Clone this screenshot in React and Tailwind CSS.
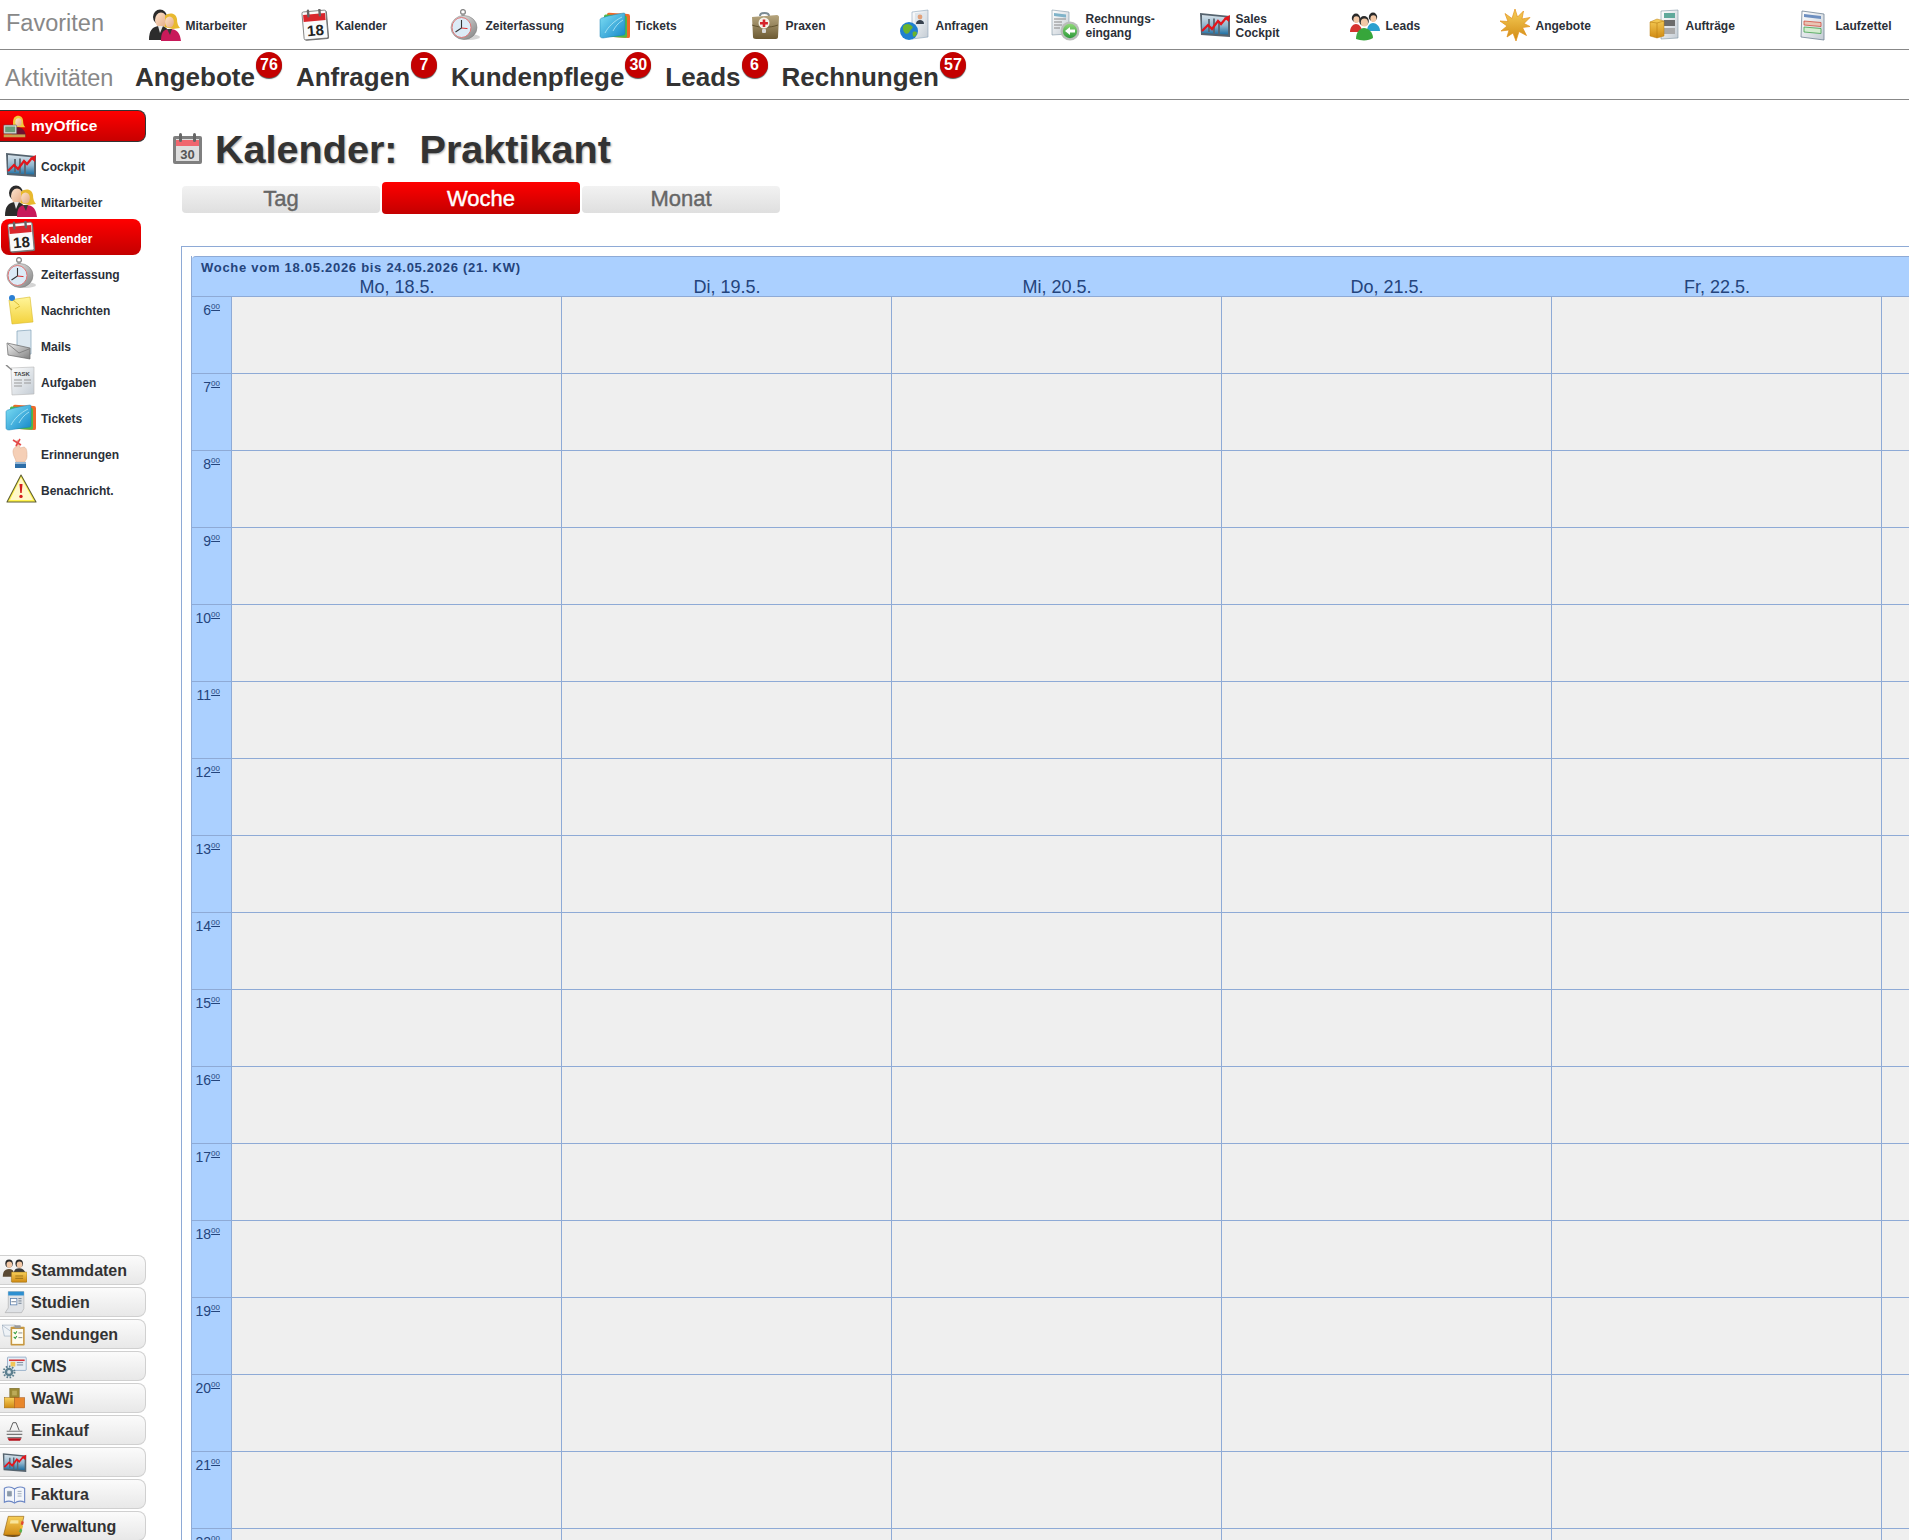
import React from "react";

const Sky = () => (
  <svg className="absolute w-0 h-0" aria-hidden="true">
    <defs>
      <linearGradient id="gBlue" x1="0" y1="0" x2="1" y2="1"><stop offset="0" stopColor="#7fe0f5" /><stop offset="1" stopColor="#1487c9" /></linearGradient>
      <linearGradient id="gGold" x1="0" y1="0" x2="0" y2="1"><stop offset="0" stopColor="#f7cf5a" /><stop offset="1" stopColor="#d08a12" /></linearGradient>
      <linearGradient id="gPaper" x1="0" y1="0" x2="1" y2="1"><stop offset="0" stopColor="#ffffff" /><stop offset="1" stopColor="#c4ccd4" /></linearGradient>
      <linearGradient id="gSilver" x1="0" y1="0" x2="1" y2="1"><stop offset="0" stopColor="#f2f2f2" /><stop offset="1" stopColor="#7f7f7f" /></linearGradient>
      <linearGradient id="gBrown" x1="0" y1="0" x2="0" y2="1"><stop offset="0" stopColor="#b7a67e" /><stop offset="1" stopColor="#6c5a33" /></linearGradient>
      <linearGradient id="gNote" x1="0" y1="0" x2="0" y2="1"><stop offset="0" stopColor="#fff59a" /><stop offset="1" stopColor="#f3d23c" /></linearGradient>
      <linearGradient id="gGreen" x1="0" y1="0" x2="0" y2="1"><stop offset="0" stopColor="#8ed878" /><stop offset="1" stopColor="#2e9a3a" /></linearGradient>
      <linearGradient id="gScreen" x1="0" y1="0" x2="0" y2="1"><stop offset="0" stopColor="#d7e2ea" /><stop offset=".55" stopColor="#8fb4cc" /><stop offset="1" stopColor="#1d6fa3" /></linearGradient>
      <linearGradient id="gSkin" x1="0" y1="0" x2="1" y2="1"><stop offset="0" stopColor="#fde3cd" /><stop offset="1" stopColor="#e3a983" /></linearGradient>
    </defs>
  </svg>
);

const Head = ({ x, y, r = 4, hair = "#2b2b2b" }) => (
  <g>
    <ellipse cx={x} cy={y - 1} rx={r + 0.8} ry={r + 1} fill={hair} />
    <ellipse cx={x + 0.4} cy={y + 0.6} rx={r - 0.4} ry={r} fill="#f3c8a6" />
  </g>
);

const People = () => (
  <>
    <ellipse cx={11} cy={8} rx={7} ry={7.5} fill="#2b2b2b" />
    <ellipse cx={12} cy={11} rx={6} ry={7.5} fill="url(#gSkin)" />
    <path d="M0 31c0-9 3-14 11-14s9 5 9 14z" fill="#2c2c2c" />
    <path d="M9 17l2 7 3-7z" fill="#e8e8e8" />
    <path d="M16 7c4-4 11-3 12 3 0 4 1 7 3 9l-7 1-9-2c2-2 1-5 1-11z" fill="#e8b92f" />
    <ellipse cx={20.5} cy={13} rx={4.4} ry={5.6} fill="url(#gSkin)" />
    <path d="M12 32c0-8 2-12 9-12s10 4 11 12z" fill="#c81a5a" />
    <path d="M18 20l3 6 2-6z" fill="#3a3a3a" />
  </>
);

const Cal = () => (
  <g transform="rotate(-5 16 16)">
    <rect x="5" y="3" width="24" height="28" rx="1.5" fill="#777" />
    <rect x="4" y="2" width="24" height="28" rx="1.5" fill="#fafafa" stroke="#6d6d6d" strokeWidth=".8" />
    <rect x="5" y="5" width="22" height="7" fill="#d9262c" />
    <rect x="9" y="0" width="2.4" height="8" rx="1.2" fill="#666" />
    <rect x="20.5" y="0" width="2.4" height="8" rx="1.2" fill="#666" />
    <text x="16" y="26.5" textAnchor="middle" fontSize="15" fontWeight="700" fontFamily="Liberation Sans, sans-serif" fill="#222">18</text>
  </g>
);

const GrayCal = () => (
  <>
    <rect x="0" y="3" width="29" height="28" rx="2" fill="#7f7f7f" />
    <rect x="3" y="6" width="23" height="22" fill="#dedede" />
    <rect x="3" y="7" width="23" height="6" fill="#f0666e" />
    <rect x="6" y="0" width="3" height="9" rx="1.5" fill="#666" />
    <rect x="20" y="0" width="3" height="9" rx="1.5" fill="#666" />
    <text x="14.5" y="26" textAnchor="middle" fontSize="13" fontWeight="700" fontFamily="Liberation Sans, sans-serif" fill="#555">30</text>
  </>
);

const Watch = () => (
  <>
    <ellipse cx="20" cy="28" rx="11" ry="3" fill="#aaa" opacity=".5" />
    <circle cx="14" cy="3" r="2.4" fill="none" stroke="#888" strokeWidth="1.3" />
    <rect x="12.5" y="4.5" width="3" height="4" fill="#999" />
    <ellipse cx="15" cy="18.5" rx="13" ry="12" fill="url(#gSilver)" stroke="#777" strokeWidth=".5" />
    <ellipse cx="12.5" cy="18.5" rx="9.5" ry="10" fill="#dcebf7" stroke="#e07575" strokeWidth="1" />
    <path d="M12.5 11v8l-6 4" fill="none" stroke="#333" strokeWidth="1.1" />
    <path d="M12.5 19l6 .6" stroke="#d33" strokeWidth="1" />
  </>
);

const Tickets = () => (
  <>
    <rect x="8" y="3" width="23" height="24" rx="2" fill="#ef6a2a" transform="skewY(4)" />
    <rect x="5" y="5" width="23" height="22" rx="2" fill="#4fb848" transform="skewY(4)" />
    <path d="M3 9c5-2 15-4 22-5 1 0 1 1 1 2v18c0 1 0 1-1 2-6 1-15 2-21 3-2 0-3-1-3-2V11c0-1 1-2 2-2z" fill="url(#gBlue)" stroke="#1a83b5" strokeWidth=".5" />
    <path d="M6 24C9 18 15 12 23 8M14 22c2-4 5-8 10-11" fill="none" stroke="#c6f2fb" strokeWidth=".7" />
  </>
);

const Case = () => (
  <>
    <path d="M11 7c0-4 9-4 9 0" fill="none" stroke="#7b8b94" strokeWidth="2" />
    <path d="M3 8l25-2c1 0 2 1 2 2l-1 20c0 1-1 2-2 2H7c-2 0-3-1-3-2z" fill="url(#gBrown)" />
    <path d="M3 16c8 3 18 3 26 0" fill="none" stroke="#574723" strokeWidth=".8" />
    <circle cx="15" cy="14" r="5.5" fill="#f5f2e8" />
    <path d="M13.7 10.5h2.6V13h2.6v2.6h-2.6v2.4h-2.6v-2.4H11V13h2.7z" fill="#d5232a" />
    <rect x="13" y="20" width="4" height="4" rx="1" fill="#d8d8d8" />
  </>
);

const Anfrage = () => (
  <>
    <path d="M13 3l16-2v27l-16 2z" fill="url(#gPaper)" stroke="#8aa2b8" strokeWidth=".6" />
    <rect x="16" y="4" width="10" height="12" fill="#dfe6ec" />
    <circle cx="21" cy="8" r="2.4" fill="#e2a27b" />
    <path d="M17 15c0-3 2-4 4-4s4 1 4 4z" fill="#38424e" />
    <circle cx="10" cy="22" r="9" fill="#1f7fd0" />
    <path d="M5 16c3-2 6-1 8 1s-1 3-2 5-3 4-5 2-3-6-1-8zM14 23c2-1 4 0 4 1s-2 4-3 4-2-4-1-5z" fill="#6ab42d" />
  </>
);

const Rechnung = () => (
  <>
    <path d="M3 1l17 2v22L3 26z" fill="url(#gPaper)" stroke="#7d93a3" strokeWidth=".6" />
    <path d="M5 4l12 1.5v3L5 7z" fill="#7fb3c9" />
    <path d="M5 10h12M5 13h8M5 16h8M5 19h6" stroke="#888" strokeWidth="1.2" />
    <circle cx="21" cy="22" r="9.5" fill="#b9bdb9" />
    <circle cx="21" cy="22" r="7.2" fill="url(#gGreen)" />
    <path d="M16 22l5-4v2.4h5v3.2h-5V26z" fill="#fff" />
  </>
);

const Chart = () => (
  <>
    <path d="M1 4l30 3v21L2 26z" fill="#55636e" />
    <path d="M3 6l26 2.5v17L3 24z" fill="url(#gScreen)" />
    <path d="M10 10v13M15 9.5v15M20 12v13" stroke="#5b6670" strokeWidth="1.8" />
    <path d="M3 22l6-6 4 4 6-8 3 3 5-6" fill="none" stroke="#e4151b" strokeWidth="2.2" />
    <path d="M31 6l-1 7-5-4z" fill="#e4151b" />
  </>
);

const Leads = () => (
  <>
    <Head x={7} y={10} r={3.4} />
    <path d="M1 23c0-5 3-8 6-8s6 3 6 8z" fill="#d6322e" />
    <Head x={24} y={9} r={3.4} />
    <path d="M18 22c0-5 3-8 6-8s7 3 7 8z" fill="#2ba0cf" />
    <Head x={15} y={13} r={4} />
    <path d="M7 30c0-7 4-11 8-11s9 4 9 10c-4 3-12 3-17 1z" fill="#37a63b" />
  </>
);

const Star = () => (
  <path d="M16 0l2.5 8 6-6-1.5 8 8-1.5-6 6 6 3-7.5 1 4 8-7.5-4L17 32l-3-8-6 4 2-7-8 1 6-5-7-5 8 .5-3-8 7 5z" fill="url(#gGold)" stroke="#e2901a" strokeWidth=".7" />
);

const Auftrag = () => (
  <>
    <path d="M12 2l17-1v28l-17 1z" fill="url(#gPaper)" stroke="#7d93a3" strokeWidth=".6" />
    <rect x="15" y="4" width="11" height="5" fill="#5fa99b" />
    <rect x="15" y="11" width="11" height="6" fill="#6c6c6c" />
    <rect x="15" y="19" width="11" height="6" fill="#a9a9a9" />
    <path d="M1 13l7-3 7 2v15l-7 2-7-2z" fill="url(#gGold)" stroke="#b97d12" strokeWidth=".5" />
    <path d="M8 14v15M1 13l7 1 7-2" fill="none" stroke="#b97d12" strokeWidth=".6" />
  </>
);

const Laufzettel = () => (
  <>
    <path d="M3 2l22 3v26L2 28z" fill="url(#gPaper)" stroke="#6f8293" strokeWidth=".8" />
    <path d="M5 5l17 2v3L5 8z" fill="#6d8fc0" />
    <path d="M5 12l17 1.5v4L5 16z" fill="#e9c4b4" stroke="#cf3b2d" strokeWidth=".7" />
    <path d="M5 18l17 1.5v5L5 23z" fill="#d4ecd0" stroke="#2e9a3a" strokeWidth=".7" />
  </>
);

const OfficeIcon = () => (
  <>
    <path d="M14 10c0-6 3-9 7-9s7 3 7 8c0 3 1 6 3 8H13c1-2 1-4 1-7z" fill="#f0c93a" />
    <ellipse cx="21.5" cy="10" rx="4.4" ry="5.6" fill="url(#gSkin)" />
    <path d="M12 30c0-8 3-13 9-13s10 5 11 13z" fill="#6e1230" />
    <rect x="1" y="14" width="18" height="12" rx="1" fill="#dcdcdc" stroke="#555" strokeWidth=".8" />
    <rect x="3" y="16" width="14" height="8" fill="#6a9a78" />
    <path d="M1 27h30v4H1z" fill="#c9a24f" />
  </>
);

const Note = () => (
  <>
    <path d="M4 7l21-3 3 25-21 2z" fill="url(#gNote)" stroke="#d8b928" strokeWidth=".6" />
    <circle cx="7" cy="5" r="3" fill="#2b7fd4" />
    <path d="M8 7l6 5M10 16l5-3" stroke="#cfae20" strokeWidth=".8" />
  </>
);

const Mail = () => (
  <>
    <path d="M12 2l14-1v24l-14 2z" fill="#dde8f0" stroke="#7fa0b8" strokeWidth=".7" />
    <path d="M2 14l23 5v11L3 26z" fill="url(#gSilver)" stroke="#666" strokeWidth=".7" />
    <path d="M3 15l11 9 10-4" fill="none" stroke="#777" strokeWidth=".8" />
  </>
);

const Task = () => (
  <>
    <path d="M6 3l23-1v27l-22 1z" fill="url(#gPaper)" stroke="#b6b6b6" strokeWidth=".6" />
    <path d="M1 0l6 5" stroke="#8a8a8a" strokeWidth="1.5" />
    <text x="17" y="11" textAnchor="middle" fontSize="6" fontWeight="700" fontFamily="Liberation Sans, sans-serif" fill="#444">TASK</text>
    <path d="M9 15h8M9 18h8M9 21h8M19 15h7M19 18h7" stroke="#999" strokeWidth="1.2" />
  </>
);

const Hand = () => (
  <>
    <path d="M12 3c2 0 2 4 3 8l4-1c3 1 3 5 3 9s-2 4-2 6h-9c0-3-3-6-3-10s2-4 3-6z" fill="#f5cfb6" stroke="#d9a98a" strokeWidth=".5" />
    <path d="M8 3l8 5M15 2l-4 7" stroke="#e44848" strokeWidth="1.6" />
    <path d="M10 25h11v6H10z" fill="#2d6ea8" />
    <path d="M10 26h11" stroke="#fff" strokeWidth="1" />
  </>
);

const Warn = () => (
  <>
    <path d="M16 2L31 29H2z" fill="#fff24a" stroke="#5f5f34" strokeWidth="1.1" strokeLinejoin="round" />
    <path d="M16 4.5L28 27H5z" fill="#fff8c9" />
    <path d="M14.5 11h3l-.8 9h-1.4z" fill="#d31c1c" />
    <circle cx="16" cy="23.4" r="1.7" fill="#d31c1c" />
  </>
);

const Stamm = () => (
  <>
    <Head x={9} y={8} r={4} />
    <Head x={22} y={8} r={4} />
    <path d="M1 24c0-7 3-10 8-10s6 2 7 10z" fill="#5b4a34" />
    <path d="M15 22c0-7 2-9 7-9s8 3 8 9z" fill="#3b3b3b" />
    <rect x="12" y="18" width="20" height="13" rx="1" fill="url(#gGold)" stroke="#8a6510" strokeWidth=".6" />
    <path d="M17 23h10M17 26h10" stroke="#8a6510" strokeWidth="1" />
  </>
);

const Studien = () => (
  <>
    <path d="M8 2h20v22l-3 5H4l4-6z" fill="#dfe2e6" stroke="#999" strokeWidth=".6" />
    <rect x="8" y="2" width="20" height="5" fill="#2d8fd0" />
    <rect x="11" y="11" width="8" height="8" fill="#fff" stroke="#5a7fae" />
    <path d="M21 11h4M21 14h4M21 17h4M12 15h6" stroke="#6b7c90" strokeWidth="1.2" />
  </>
);

const Sendung = () => (
  <>
    <path d="M0 4h17l1 14H3z" fill="#eef2f6" stroke="#8ea0b3" strokeWidth=".7" />
    <path d="M0 4l10 7 7-7" fill="none" stroke="#8ea0b3" strokeWidth=".7" />
    <rect x="11" y="6" width="18" height="24" rx="1" fill="#c7973f" />
    <rect x="13" y="9" width="14" height="19" fill="#fffdf0" />
    <rect x="16" y="4" width="8" height="4" rx="1" fill="#9a9a9a" />
    <path d="M15 13l2 2 2-3M15 19l2 2 2-3" fill="none" stroke="#2f9a3a" strokeWidth="1.3" />
    <path d="M21 14h5M21 20h5" stroke="#888" strokeWidth="1.2" />
  </>
);

const Cms = () => (
  <>
    <rect x="7" y="4" width="24" height="17" rx="1" fill="#e6edf4" stroke="#6f8fb5" strokeWidth=".8" />
    <rect x="9" y="7" width="20" height="2" fill="#d6333a" />
    <rect x="11" y="10" width="6" height="6" fill="#f0c558" />
    <path d="M19 11h8M19 14h8" stroke="#6b7c90" strokeWidth="1.1" />
    <circle cx="9" cy="23" r="5.5" fill="#5c7f8f" />
    <circle cx="9" cy="23" r="7" fill="none" stroke="#5c7f8f" strokeWidth="2.4" strokeDasharray="2 2" />
    <circle cx="9" cy="23" r="2.4" fill="#dfe6ea" />
  </>
);

const Wawi = () => (
  <>
    <rect x="10" y="3" width="12" height="12" fill="#9c8a35" stroke="#6e5f1f" strokeWidth=".7" />
    <rect x="13" y="6" width="6" height="6" fill="#bcab58" />
    <rect x="3" y="15" width="13" height="13" fill="url(#gGold)" stroke="#a06d10" strokeWidth=".7" />
    <rect x="16" y="15" width="13" height="13" fill="#e8872b" stroke="#a9591a" strokeWidth=".7" />
  </>
);

const Basket = () => (
  <>
    <path d="M10 16l4-10h4l4 10" fill="none" stroke="#555" strokeWidth="1.2" />
    <path d="M6 17h20M6 21h20M7 25h18" stroke="#777" strokeWidth="1.4" />
    <path d="M7 26h18l-2 3H9z" fill="#b3121c" />
  </>
);

const Book = () => (
  <>
    <path d="M3 8c4-2 9-2 13 1 4-3 9-3 13-1v18c-4-2-9-2-13 1-4-3-9-3-13-1z" fill="#f3f6fb" stroke="#6b86c4" strokeWidth="1.4" />
    <path d="M16 9v18" stroke="#6b86c4" />
    <path d="M7 12h5v6H7zM20 12h5M20 15h5M20 18h5" fill="#8a99a8" stroke="#8a99a8" />
  </>
);

const Ledger = () => (
  <>
    <path d="M8 3h20l-5 24H2z" fill="url(#gGold)" stroke="#8f5f14" strokeWidth=".8" />
    <path d="M2 27c4 3 16 3 20 1l1-1H2z" fill="#7b5518" />
    <path d="M25 9l3 1-1 4-3-1z" fill="#e2492f" />
    <path d="M24 14l3 1-1 4-3-1z" fill="#f0c030" />
    <path d="M23 19l3 1-1 4-3-1z" fill="#57b04a" />
    <path d="M11 8h10v4H10z" fill="#f8e49a" />
  </>
);

const Ic = ({ size = "w-8 h-8", box = "0 0 32 32", children }) => (
  <svg viewBox={box} className={`${size} shrink-0`} aria-hidden="true">{children}</svg>
);

const favorites = [
  { icon: <People />, label: "Mitarbeiter" },
  { icon: <Cal />, label: "Kalender" },
  { icon: <Watch />, label: "Zeiterfassung" },
  { icon: <Tickets />, label: "Tickets" },
  { icon: <Case />, label: "Praxen" },
  { icon: <Anfrage />, label: "Anfragen" },
  { icon: <Rechnung />, label: "Rechnungs-\neingang" },
  { icon: <Chart />, label: "Sales\nCockpit" },
  { icon: <Leads />, label: "Leads" },
  { icon: <Star />, label: "Angebote" },
  { icon: <Auftrag />, label: "Aufträge" },
  { icon: <Laufzettel />, label: "Laufzettel" },
];

const activities = [
  { label: "Angebote", count: 76 },
  { label: "Anfragen", count: 7 },
  { label: "Kundenpflege", count: 30 },
  { label: "Leads", count: 6 },
  { label: "Rechnungen", count: 57 },
];

const sideItems = [
  { icon: <Chart />, label: "Cockpit" },
  { icon: <People />, label: "Mitarbeiter" },
  { icon: <Cal />, label: "Kalender", active: true },
  { icon: <Watch />, label: "Zeiterfassung" },
  { icon: <Note />, label: "Nachrichten" },
  { icon: <Mail />, label: "Mails" },
  { icon: <Task />, label: "Aufgaben" },
  { icon: <Tickets />, label: "Tickets" },
  { icon: <Hand />, label: "Erinnerungen" },
  { icon: <Warn />, label: "Benachricht." },
];

const modules = [
  { icon: <Stamm />, label: "Stammdaten" },
  { icon: <Studien />, label: "Studien" },
  { icon: <Sendung />, label: "Sendungen" },
  { icon: <Cms />, label: "CMS" },
  { icon: <Wawi />, label: "WaWi" },
  { icon: <Basket />, label: "Einkauf" },
  { icon: <Chart />, label: "Sales" },
  { icon: <Book />, label: "Faktura" },
  { icon: <Ledger />, label: "Verwaltung" },
];

const days = ["Mo, 18.5.", "Di, 19.5.", "Mi, 20.5.", "Do, 21.5.", "Fr, 22.5.", "Sa, 23.5."];
const hours = [6, 7, 8, 9, 10, 11, 12, 13, 14, 15, 16, 17, 18, 19, 20, 21, 22];

const App = () => {
  return (
    <div className="w-[1909px] h-[1540px] overflow-hidden flex flex-col bg-white font-['Liberation_Sans',Arial,sans-serif] text-[#333]">
      <Sky />
      {/* Favoriten */}
      <div className="h-[50px] shrink-0 border-b border-[#888] flex items-center pl-[6px]">
        <div className="w-[141.5px] shrink-0 text-[23.5px] leading-[30px] text-[#888] -mt-[3px]">Favoriten</div>
        {favorites.map((f) => (
          <div key={f.label} className="w-[150px] shrink-0 flex items-center">
            <div className="w-[34px] flex justify-center"><Ic>{f.icon}</Ic></div>
            <div className="ml-[4px] text-[12px] font-bold leading-[14px] whitespace-pre text-[#2b3038] pt-[3px]">{f.label}</div>
          </div>
        ))}
      </div>

      {/* Aktivitaeten */}
      <div className="h-[50px] shrink-0 border-b border-[#888] flex items-center pl-[5px]">
        <div className="w-[130px] text-[23.5px] leading-[30px] text-[#888] mt-[6px]">Aktivitäten</div>
        {activities.map((a) => (
          <div key={a.label} className="flex items-center mr-[14px] mt-[5px]">
            <span className="text-[26px] font-bold leading-[30px] text-[#333]">{a.label}</span>
            <span className="ml-[1px] -mt-[24px] w-[26px] h-[26px] rounded-full bg-[#c40000] shadow-[0_1px_1px_#555] flex items-center justify-center text-white text-[16px] font-bold leading-none">{a.count}</span>
          </div>
        ))}
      </div>

      <div className="flex-1 min-h-0 flex">
        {/* Seitenleiste */}
        <div className="w-[150px] shrink-0 flex flex-col pt-[10px]">
          <div className="w-[146px] h-[32px] shrink-0 flex items-center pl-[3px] rounded-r-lg border border-l-0 border-[#333] bg-gradient-to-b from-[#ff0000] to-[#c80000] text-white text-[15.5px] font-bold">
            <Ic size="w-[23px] h-[23px]"><OfficeIcon /></Ic>
            <span className="ml-[5px]">myOffice</span>
          </div>
          <div className="mt-[5px] flex flex-col">
            {sideItems.map((s) => (
              <div key={s.label} className={s.active ? "w-[140px] h-[36px] ml-[1px] pl-[4px] flex items-center rounded-lg bg-gradient-to-b from-[#ff0000] to-[#c40000] text-white" : "w-[140px] h-[36px] ml-[1px] pl-[4px] flex items-center text-[#2b3038]"}>
                <Ic size="w-[32px] h-[32px]">{s.icon}</Ic>
                <span className="ml-[4px] mt-[3px] text-[12px] font-bold">{s.label}</span>
              </div>
            ))}
          </div>
          <div className="mt-auto -mb-[1px] flex flex-col gap-[2px]">
            {modules.map((m) => (
              <div key={m.label} className="w-[146px] h-[30px] shrink-0 flex items-center pl-[2px] rounded-r-lg border border-l-0 border-[#d0d0d0] bg-gradient-to-b from-[#fbfbfb] to-[#e8e8e8]">
                <Ic size="w-[25px] h-[25px]">{m.icon}</Ic>
                <span className="ml-[4px] mt-[1px] text-[16px] font-bold text-[#333]">{m.label}</span>
              </div>
            ))}
          </div>
        </div>

        {/* Inhalt */}
        <div className="flex-1 min-w-0 pl-[23px] flex flex-col">
          <div className="mt-[32px] h-[33px] shrink-0 flex items-center">
            <Ic size="w-[29px] h-[31px]" box="0 0 29 31"><GrayCal /></Ic>
            <h1 className="ml-[13px] text-[39.6px] font-bold leading-[40px] whitespace-pre text-[#333] [text-shadow:1px_1px_2px_#aaa]">Kalender:  Praktikant</h1>
          </div>

          <div className="mt-[17px] ml-[9px] flex items-end shrink-0">
            <div className="w-[198px] h-[27px] mb-[1px] pb-[2px] flex items-center justify-center rounded bg-gradient-to-b from-[#f2f2f2] to-[#dfdfdf] text-[22px] text-[#666] [-webkit-text-stroke:0.4px_#666]">Tag</div>
            <div className="ml-[2px] w-[198px] h-[32px] flex items-center justify-center rounded bg-gradient-to-b from-[#ff0000] to-[#c40000] text-[22px] text-white [-webkit-text-stroke:0.4px_#fff]">Woche</div>
            <div className="ml-[2px] w-[198px] h-[27px] mb-[1px] pb-[2px] flex items-center justify-center rounded bg-gradient-to-b from-[#f2f2f2] to-[#dfdfdf] text-[22px] text-[#666] [-webkit-text-stroke:0.4px_#666]">Monat</div>
          </div>

          <div className="mt-[32px] ml-[8px] w-[2000px] flex-1 border-l border-t border-[#8eaad6] pl-[9px] pt-[9px]">
            <div className="border-l border-[#8eaad6] text-[#24447c]">
              <div className="h-[41px] bg-[#abd0ff] border-t border-b border-[#8eaad6] rounded-tl">
                <div className="pl-[9px] pt-[3px] text-[13px] leading-[15px] font-bold tracking-[0.72px]">Woche vom 18.05.2026 bis 24.05.2026 (21. KW)</div>
                <div className="flex pl-[40px] mt-[2px]">
                  {days.map((d) => (
                    <div key={d} className="w-[330px] shrink-0 text-center text-[18px] leading-[20px] text-[#24447c]">{d}</div>
                  ))}
                </div>
              </div>
              {hours.map((h) => (
                <div key={h} className="h-[77px] flex border-b border-[#8eaad6]">
                  <div className="w-[40px] shrink-0 bg-[#abd0ff] border-r border-[#8eaad6] pr-[11px] pt-[5px] flex justify-end items-start text-[14px] leading-[16px]">
                    <span>{h}</span>
                    <span className="text-[8px] leading-[10px] underline">00</span>
                  </div>
                  {days.map((d) => (
                    <div key={d} className="w-[330px] shrink-0 bg-[#efefef] border-r border-[#8eaad6]" />
                  ))}
                </div>
              ))}
            </div>
          </div>
        </div>
      </div>
    </div>
  );
};

export default App;
